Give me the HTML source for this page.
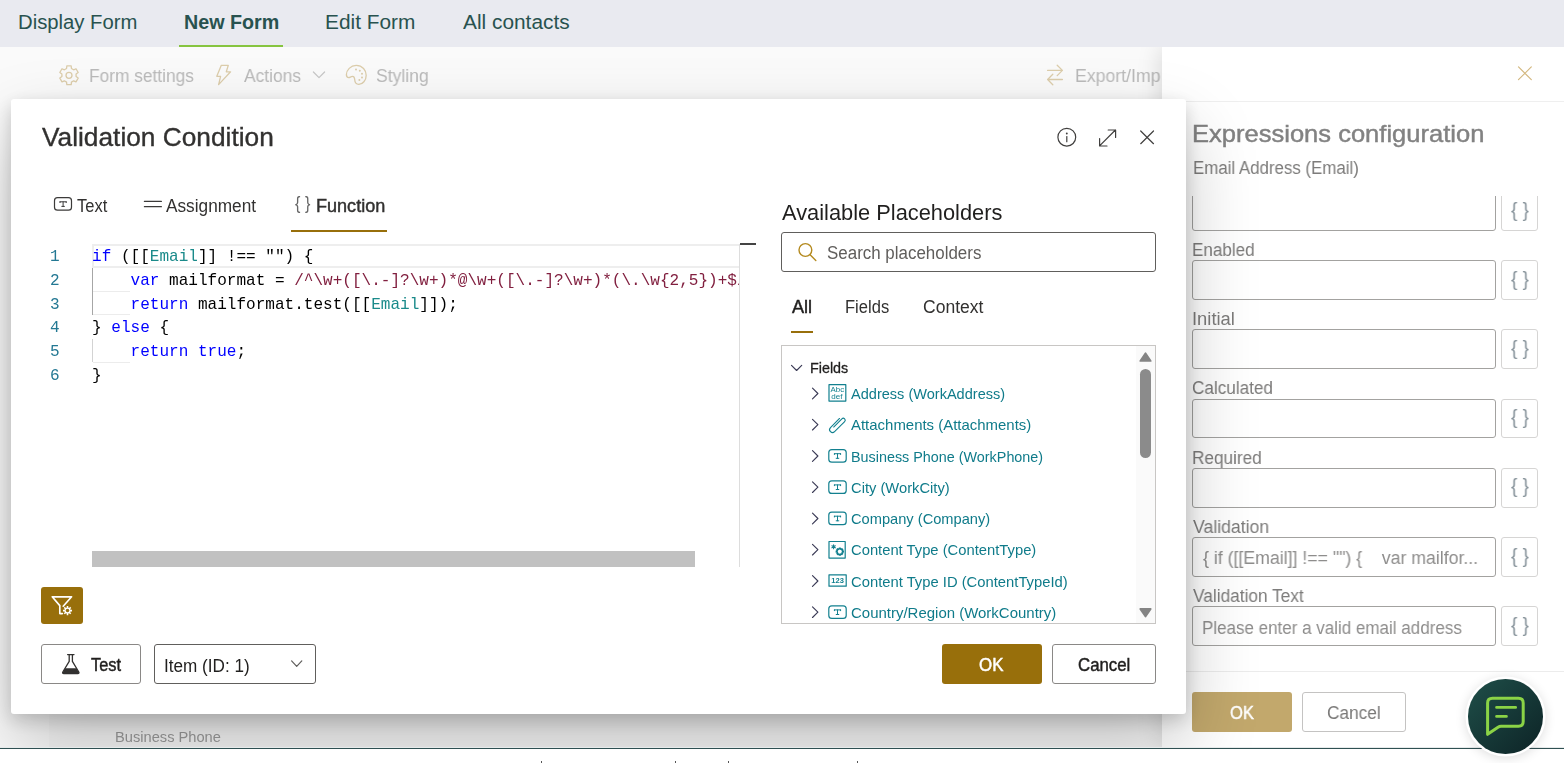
<!DOCTYPE html>
<html lang="en">
<head>
<meta charset="utf-8">
<title>Validation Condition</title>
<style>
*{box-sizing:border-box;margin:0;padding:0}
html,body{width:1564px;height:763px;overflow:hidden;background:#fff}
body{position:relative;font-family:"Liberation Sans",sans-serif;color:#201f1e}
.abs{position:absolute}
.t{position:absolute;white-space:nowrap;line-height:1;transform-origin:0 50%}
svg{position:absolute;overflow:visible}
/* top bar */
#topbar{left:0;top:0;width:1564px;height:47px;background:#e9eaf0}
#topbar .t{color:#28524f}
#nf-ul{left:179px;top:45px;width:104px;height:2px;background:#86c440}
/* page under overlay */
#page{left:0;top:47px;width:1564px;height:700px;background:#fafafa;overflow:hidden}
#canvas{left:49px;top:53px;width:1113px;height:647px;background:#f6f6f6}
#bottomline{left:0;top:747px;width:1564px;height:2px;background:linear-gradient(#e6eaea 0,#e6eaea 50%,#2f5052 50%,#2f5052 100%)}
#bottomwhite{left:0;top:749px;width:1564px;height:14px;background:#fff}
.tb .t{font-size:17px;color:#bababa;top:67px}
/* right panel */
#panel{left:1162px;top:47px;width:402px;height:700px;background:#fff;box-shadow:-2px 0 22px rgba(0,0,0,.13);clip-path:inset(0 0 0 -60px)}
#panel-hr{left:1162px;top:101px;width:402px;height:1px;background:#efefef}
#panel-fr{left:1162px;top:671px;width:402px;height:1px;background:#ececec}
.plabel{font-size:16.5px;color:#7d7c7b}
.pin{position:absolute;left:1192px;width:304px;height:39.75px;border:1px solid #a3a2a0;border-radius:3px;background:#fff}
.pbr{position:absolute;left:1501px;width:37px;height:39.75px;border:1px solid #d6d5d4;border-radius:3px;background:#fff}
.pbr .t{left:7px;top:9px;font-size:19px;color:#7a8287;letter-spacing:1px}
.pbg{color:#86929a}
.pin .t{left:11px;top:11px;font-size:16.5px;color:#8e8d8c}
/* modal */
#modal{left:11px;top:99px;width:1175px;height:615px;background:#fff;border-radius:3px;box-shadow:0 32px 72px rgba(0,0,0,.22),0 6px 18px rgba(0,0,0,.18)}
.mono{font-family:"Liberation Mono",monospace;font-size:17px;line-height:20px}
.ln,.cl{transform-origin:0 50%;transform:scaleX(.9436)}
.ln{position:absolute;left:50px;color:#237893}
.cl{position:absolute;left:92px;white-space:pre;color:#000}
.k{color:#0000ff}.p{color:#1a8a8a}.r{color:#811f3f}
.btn{position:absolute;height:40px;border:1px solid #8a8886;border-radius:3px;background:#fff}
#ph1,#ph2,[id^=pl],[id^=pv],#pok,#pcn,[id^=pb],#bp,[id^=tl]{will-change:transform}
.sb{-webkit-text-stroke:0.45px currentColor}
.tree .t{font-size:15px;color:#0f7b8a}
</style>
<style id="fit">
#tb1{left:18.12px;top:11.00px;font-size:20.0px;line-height:22px;transform:scaleX(1.0139)}
#tb2{left:183.64px;top:11.00px;font-size:20.0px;line-height:22px;transform:scaleX(0.9849)}
#tb3{left:325.26px;top:11.00px;font-size:20.0px;line-height:22px;transform:scaleX(1.0422)}
#tb4{left:463.29px;top:11.00px;font-size:20.0px;line-height:22px;transform:scaleX(1.0426)}
#tl1{left:88.55px;top:66.00px;font-size:18.0px;line-height:20px;transform:scaleX(0.9621)}
#tl2{left:243.75px;top:66.00px;font-size:18.0px;line-height:20px;transform:scaleX(0.9660)}
#tl3{left:375.88px;top:66.00px;font-size:18.0px;line-height:20px;transform:scaleX(0.9754)}
#tl4{left:1075.34px;top:66.00px;font-size:18.0px;line-height:20px;transform:scaleX(0.9825)}
#bp{left:114.78px;top:729.00px;font-size:14.5px;line-height:16px;transform:scaleX(1.0106)}
#ph1{left:1192.07px;top:120.00px;font-size:24.5px;line-height:27px;transform:scaleX(1.0420)}
#ph2{left:1192.60px;top:158.00px;font-size:18.0px;line-height:20px;transform:scaleX(0.9370)}
#pl1{left:1191.59px;top:240.00px;font-size:18.0px;line-height:20px;transform:scaleX(0.9483)}
#pl2{left:1192.10px;top:309.00px;font-size:18.0px;line-height:20px;transform:scaleX(1.0215)}
#pl3{left:1191.86px;top:378.00px;font-size:18.0px;line-height:20px;transform:scaleX(0.9522)}
#pl4{left:1192.38px;top:448.00px;font-size:18.0px;line-height:20px;transform:scaleX(0.9550)}
#pl5{left:1192.71px;top:517.00px;font-size:18.0px;line-height:20px;transform:scaleX(0.9782)}
#pl6{left:1192.74px;top:586.00px;font-size:18.0px;line-height:20px;transform:scaleX(0.9585)}
#pv1{left:1203.09px;top:548.00px;font-size:18.0px;line-height:20px;transform:scaleX(0.9834)}
#pv2{left:1202.19px;top:618.00px;font-size:18.0px;line-height:20px;transform:scaleX(0.9441)}
#pok{left:1230.23px;top:703.00px;font-size:18.0px;line-height:20px;transform:scaleX(0.9197)}
#pcn{left:1327.06px;top:703.00px;font-size:18.0px;line-height:20px;transform:scaleX(0.9582)}
#mt{left:42.12px;top:123.00px;font-size:25.5px;line-height:28px;transform:scaleX(1.0305)}
#mtab1{left:77.18px;top:196.00px;font-size:18.0px;line-height:20px;transform:scaleX(0.9160)}
#mtab2{left:165.93px;top:196.00px;font-size:18.0px;line-height:20px;transform:scaleX(0.9574)}
#mtab3{left:315.69px;top:196.00px;font-size:18.0px;line-height:20px;transform:scaleX(1.0028)}
#mbr{left:295.29px;top:192.00px;font-size:18.3px;line-height:21px;transform:scaleX(0.8831)}
#pb0{left:1510.65px;top:198.00px;font-size:21.0px;line-height:23px;transform:scaleX(0.9090)}
#pb1{left:1510.65px;top:267.00px;font-size:21.0px;line-height:23px;transform:scaleX(0.9090)}
#pb2{left:1510.65px;top:336.00px;font-size:21.0px;line-height:23px;transform:scaleX(0.9090)}
#pb3{left:1510.65px;top:405.00px;font-size:21.0px;line-height:23px;transform:scaleX(0.9090)}
#pb4{left:1510.65px;top:474.00px;font-size:21.0px;line-height:23px;transform:scaleX(0.9090)}
#pb5{left:1510.65px;top:544.00px;font-size:21.0px;line-height:23px;transform:scaleX(0.9090)}
#pb6{left:1510.65px;top:613.00px;font-size:21.0px;line-height:23px;transform:scaleX(0.9090)}
#bt1{left:91.09px;top:655.00px;font-size:18.0px;line-height:20px;transform:scaleX(0.9080)}
#bt2{left:164.06px;top:656.00px;font-size:18.0px;line-height:20px;transform:scaleX(0.9514)}
#bt3{left:979.41px;top:655.00px;font-size:18.0px;line-height:20px;transform:scaleX(0.9390)}
#bt4{left:1077.97px;top:655.00px;font-size:18.0px;line-height:20px;transform:scaleX(0.9333)}
#ap{left:781.69px;top:200.00px;font-size:22.3px;line-height:25px;transform:scaleX(0.9789)}
#sp{left:827.13px;top:243.00px;font-size:18.0px;line-height:20px;transform:scaleX(0.9408)}
#pt1{left:792.18px;top:297.00px;font-size:18.0px;line-height:20px;transform:scaleX(1.0068)}
#pt2{left:845.28px;top:297.00px;font-size:18.0px;line-height:20px;transform:scaleX(0.9199)}
#pt3{left:922.77px;top:297.00px;font-size:18.0px;line-height:20px;transform:scaleX(0.9734)}
#tr0{left:809.77px;top:359.00px;font-size:15.0px;line-height:17px;transform:scaleX(0.9559)}
#tr1{left:851.37px;top:385.00px;font-size:15.0px;line-height:17px;transform:scaleX(0.9697)}
#tr2{left:851.35px;top:416.00px;font-size:15.0px;line-height:17px;transform:scaleX(0.9965)}
#tr3{left:850.80px;top:448.00px;font-size:15.0px;line-height:17px;transform:scaleX(0.9574)}
#tr4{left:850.66px;top:479.00px;font-size:15.0px;line-height:17px;transform:scaleX(0.9814)}
#tr5{left:850.66px;top:510.00px;font-size:15.0px;line-height:17px;transform:scaleX(0.9766)}
#tr6{left:850.66px;top:541.00px;font-size:15.0px;line-height:17px;transform:scaleX(0.9846)}
#tr7{left:850.66px;top:573.00px;font-size:15.0px;line-height:17px;transform:scaleX(0.9858)}
#tr8{left:850.65px;top:604.00px;font-size:15.0px;line-height:17px;transform:scaleX(0.9982)}
</style>
</head>
<body>
<!-- TOP BAR -->
<div id="topbar" class="abs">
  <span class="t" id="tb1" style="">Display Form</span>
  <span class="t" id="tb2" style="font-weight:bold">New Form</span>
  <span class="t" id="tb3" style="">Edit Form</span>
  <span class="t" id="tb4" style="">All contacts</span>
  <div id="nf-ul" class="abs"></div>
</div>
<!-- PAGE -->
<div id="page" class="abs"></div>
<div id="canvas" class="abs" style="top:100px"></div>
<div class="tb">
  <span class="t" id="tl1" style="">Form settings</span>
  <span class="t" id="tl2" style="">Actions</span>
  <span class="t" id="tl3" style="">Styling</span>
  <span class="t" id="tl4" style="">Export/Imp</span>
</div>
<span class="t" id="bp" style="color:#9b9b9b">Business Phone</span>
<!-- PANEL -->
<div id="panel" class="abs"></div>
<div id="panel-hr" class="abs"></div>
<div id="panel-fr" class="abs"></div>
<span class="t sb" id="ph1" style="color:#828282">Expressions configuration</span>
<span class="t plabel" id="ph2" style="">Email Address (Email)</span>
<div class="abs" style="left:1190px;top:196px;width:360px;height:40px;overflow:hidden">
  <div class="pin" style="left:2px;top:-4.5px"></div><div class="pbr" style="left:311px;top:-4.5px"></div>
</div>
<span class="t plabel" id="pl1" style="">Enabled</span>
<div class="pin" style="top:260px"></div><div class="pbr" style="top:260px"></div>
<span class="t plabel" id="pl2" style="">Initial</span>
<div class="pin" style="top:329.25px"></div><div class="pbr" style="top:329.25px"></div>
<span class="t plabel" id="pl3" style="">Calculated</span>
<div class="pin" style="top:398.5px"></div><div class="pbr" style="top:398.5px"></div>
<span class="t plabel" id="pl4" style="">Required</span>
<div class="pin" style="top:467.75px"></div><div class="pbr" style="top:467.75px"></div>
<span class="t plabel" id="pl5" style="">Validation</span>
<div class="pin" style="top:537px"></div><div class="pbr" style="top:537px"></div>
<span class="t plabel" id="pl6" style="">Validation Text</span>
<div class="pin" style="top:606.25px"></div><div class="pbr" style="top:606.25px"></div>
<span class="t" id="pv1" style="color:#8e8d8c;white-space:pre">{ if ([[Email]] !== "") {    var mailfor...</span>
<span class="t" id="pv2" style="color:#8e8d8c">Please enter a valid email address</span>
<span class="t pbg" id="pb0">{ }</span><span class="t pbg" id="pb1">{ }</span><span class="t pbg" id="pb2">{ }</span><span class="t pbg" id="pb3">{ }</span><span class="t pbg" id="pb4">{ }</span><span class="t pbg" id="pb5">{ }</span><span class="t pbg" id="pb6">{ }</span>
<div class="abs" style="left:1192px;top:692px;width:100px;height:40px;background:#c2a86c;border-radius:3px"></div>
<span class="t sb" id="pok" style="color:#fff">OK</span>
<div class="abs" style="left:1302px;top:692px;width:104px;height:40px;border:1px solid #c4c3c2;border-radius:3px;background:#fff"></div>
<span class="t" id="pcn" style="color:#7a7978">Cancel</span>
<svg id="ic-under" style="left:0;top:0" width="1564" height="763" viewBox="0 0 1564 763" fill="none" stroke-linecap="round" stroke-linejoin="round">
<g stroke="#dccdab" stroke-width="1.3">
<path d="M66.56,68.53 L66.81,65.95 L71.19,65.95 L71.44,68.53 L73.65,69.80 L76.00,68.73 L78.19,72.53 L76.09,74.02 L76.09,76.58 L78.19,78.07 L76.00,81.87 L73.65,80.80 L71.44,82.07 L71.19,84.65 L66.81,84.65 L66.56,82.07 L64.35,80.80 L62.00,81.87 L59.81,78.07 L61.91,76.58 L61.91,74.02 L59.81,72.53 L62.00,68.73 L64.35,69.80Z"/>
<circle cx="69" cy="75.3" r="3"/>
<path d="M221.3,65.3 L228.3,65.3 L226.3,71.8 L230.6,71.8 L218.6,84.6 L220.6,76.3 L216.8,76.3 Z"/>
<path d="M356.2,65.4 C362.5,65.4 366.2,70.5 366.2,75.2 C366.2,80.5 362.6,84.4 358.8,84.4 C355.6,84.4 354.8,82.2 354.7,79.6 C354.6,77.5 354.3,76.4 352.6,76.4 C350.8,76.4 350,77.7 348.7,77.7 C347.3,77.7 346.4,76.3 346.4,74.6 C346.4,70.2 350.6,65.4 356.2,65.4Z"/>
<path d="M1047.6,70.4 H1062.4 M1057.2,65.2 L1062.4,70.4 L1057.2,75.6 M1062.4,79.5 H1047.6 M1052.8,74.3 L1047.6,79.5 L1052.8,84.7"/>
</g>
<g fill="#dccdab"><circle cx="356" cy="69.6" r="1"/><circle cx="359.8" cy="70.8" r="1"/><circle cx="362" cy="73.8" r="1"/><circle cx="362" cy="77.5" r="1"/><circle cx="359.4" cy="80" r="1"/></g>
<path d="M313.4,72 L319,77.6 L324.6,72" stroke="#c6c6c6" stroke-width="1.2"/>
<path d="M1518.5,66.9 L1531.3,79.7 M1531.3,66.9 L1518.5,79.7" stroke="#d3b77e" stroke-width="1.15"/>
</svg>
<!-- MODAL -->
<div id="modal" class="abs"></div>
<span class="t sb" id="mt" style="color:#323130;-webkit-text-stroke-width:.35px">Validation Condition</span>
<!-- modal tabs -->
<span class="t" id="mtab1" style="color:#323130">Text</span>
<span class="t" id="mtab2" style="color:#323130">Assignment</span>
<span class="t" id="mbr" style="color:#666">{ }</span>
<span class="t sb" id="mtab3" style="color:#323130">Function</span>
<div class="abs" style="left:291px;top:230px;width:96px;height:2px;background:#986f0b"></div>
<!-- editor -->
<div class="abs" style="left:92px;top:244px;width:647px;height:24px;border:2px solid #eee;border-right:none"></div>
<div class="abs" style="left:739px;top:244px;width:1px;height:323px;background:#dddddd"></div>
<div class="abs" style="left:740px;top:243px;width:16px;height:2px;background:#444"></div>
<div class="abs" style="left:92px;top:268px;width:1px;height:47px;background:#a6a6a6"></div>
<div class="abs" style="left:92px;top:339px;width:1px;height:23px;background:#d3d3d3"></div>
<div class="abs" style="left:93px;top:291px;width:37px;height:1px;background:#ececec"></div><div class="abs" style="left:93px;top:314px;width:37px;height:1px;background:#ececec"></div><div class="abs" style="left:93px;top:362px;width:37px;height:1px;background:#ececec"></div>
<div class="abs mono" style="left:0;top:0;width:739px;height:600px;overflow:hidden;background:transparent">
<span class="ln" style="top:247px">1</span><span class="cl" style="top:247px"><span class="k">if</span> ([[<span class="p">Email</span>]] !== "") {</span>
<span class="ln" style="top:271px">2</span><span class="cl" style="top:271px">    <span class="k">var</span> mailformat = <span class="r">/^\w+([\.-]?\w+)*@\w+([\.-]?\w+)*(\.\w{2,5})+$/</span>;</span>
<span class="ln" style="top:295px">3</span><span class="cl" style="top:295px">    <span class="k">return</span> mailformat.test([[<span class="p">Email</span>]]);</span>
<span class="ln" style="top:318px">4</span><span class="cl" style="top:318px">} <span class="k">else</span> {</span>
<span class="ln" style="top:342px">5</span><span class="cl" style="top:342px">    <span class="k">return</span> <span class="k">true</span>;</span>
<span class="ln" style="top:366px">6</span><span class="cl" style="top:366px">}</span>
</div>
<div class="abs" style="left:92px;top:551px;width:603px;height:16px;background:#c1c1c1"></div>
<!-- funnel button -->
<div class="abs" style="left:41px;top:587px;width:42px;height:37px;background:#986f0b;border-radius:3px"></div>
<!-- bottom buttons -->
<div class="btn" style="left:41px;top:644px;width:100px"></div>
<span class="t sb" id="bt1" style="color:#201f1e">Test</span>
<div class="btn" style="left:154px;top:644px;width:162px;border-color:#605e5c"></div>
<span class="t" id="bt2" style="color:#201f1e">Item (ID: 1)</span>
<div class="abs" style="left:942px;top:644px;width:100px;height:40px;background:#986f0b;border-radius:3px"></div>
<span class="t sb" id="bt3" style="color:#fff">OK</span>
<div class="btn" style="left:1052px;top:644px;width:104px"></div>
<span class="t sb" id="bt4" style="color:#201f1e">Cancel</span>
<!-- placeholders -->
<span class="t" id="ap" style="color:#201f1e">Available Placeholders</span>
<div class="abs" style="left:781px;top:232px;width:375px;height:39.5px;border:1px solid #605e5c;border-radius:3px;background:#fff"></div>
<span class="t" id="sp" style="color:#605e5c">Search placeholders</span>
<span class="t sb" id="pt1" style="color:#201f1e">All</span>
<span class="t" id="pt2" style="color:#323130">Fields</span>
<span class="t" id="pt3" style="color:#323130">Context</span>
<div class="abs" style="left:791px;top:331px;width:22px;height:2px;background:#986f0b"></div>
<div class="abs" style="left:781px;top:345px;width:375px;height:279px;border:1px solid #c8c6c4;background:#fff"></div>
<div class="abs" style="left:1136px;top:346px;width:19px;height:277px;background:#fafafa"></div>
<div class="abs" style="left:1140px;top:369px;width:11px;height:89px;border-radius:6px;background:#8b8b8b"></div>
<div class="tree">
<span class="t sb" id="tr0" style="color:#201f1e;-webkit-text-stroke-width:.3px">Fields</span>
<span class="t" id="tr1" style="">Address (WorkAddress)</span>
<span class="t" id="tr2" style="">Attachments (Attachments)</span>
<span class="t" id="tr3" style="">Business Phone (WorkPhone)</span>
<span class="t" id="tr4" style="">City (WorkCity)</span>
<span class="t" id="tr5" style="">Company (Company)</span>
<span class="t" id="tr6" style="">Content Type (ContentType)</span>
<span class="t" id="tr7" style="">Content Type ID (ContentTypeId)</span>
<span class="t" id="tr8" style="">Country/Region (WorkCountry)</span>
</div>
<div id="bottomline" class="abs"></div><div id="bottomwhite" class="abs"></div>
<div class="abs" style="left:541px;top:761px;width:1px;height:2px;background:#555"></div><div class="abs" style="left:675px;top:761px;width:1px;height:2px;background:#555"></div><div class="abs" style="left:728px;top:761px;width:1px;height:2px;background:#555"></div><div class="abs" style="left:857px;top:761px;width:1px;height:2px;background:#555"></div>
<!-- chat bubble -->
<div class="abs" style="left:1468px;top:679px;width:74.6px;height:74.6px;border-radius:50%;background:linear-gradient(135deg,#1f4f49,#0d2326);box-shadow:0 0 0 2.5px #fff,0 2px 12px 2px rgba(0,0,0,.14)"></div>
<svg id="ic-over" style="left:0;top:0" width="1564" height="763" viewBox="0 0 1564 763" fill="none" stroke-linecap="round" stroke-linejoin="round">
<!-- modal header icons -->
<g stroke="#403f3e" stroke-width="1.2">
<circle cx="1066.8" cy="137.2" r="8.9"/>
<path d="M1066.8,136.5 V141.7"/>
<path d="M1099.8,145.6 L1115.4,130 M1108.2,130 H1115.6 V137.4 M1099.6,138.6 V146 H1107"/>
<path d="M1140.7,131 L1153.5,143.7 M1153.5,131 L1140.7,143.7"/>
</g>
<circle cx="1066.8" cy="133.5" r="0.95" fill="#403f3e"/>
<!-- tab icons -->
<g stroke="#3b3a39" stroke-width="1.2">
<rect x="54.5" y="197.7" width="17" height="12.5" rx="3"/>
<path d="M60,201.8 H66.2 M63.1,201.8 V206.4 M61.8,206.4 H64.4 M60,201.8 V202.6 M66.2,201.8 V202.6" stroke-width="1"/>
<path d="M144.4,201.4 H161.4 M144.4,206.7 H161.4"/>
</g>
<!-- search icon -->
<g stroke="#b48a1f" stroke-width="1.4"><circle cx="805.4" cy="250" r="6.4"/><path d="M810.1,254.7 L815.8,260.4"/></g>
<!-- tree chevrons -->
<g stroke="#3a3a55" stroke-width="1.15">
<path d="M791.5,365.3 L796.6,370.5 L801.7,365.3"/>
<path d="M812.5,388.2 L817.9,393.5 L812.5,398.8"/>
<path d="M812.5,419.4 L817.9,424.7 L812.5,430"/>
<path d="M812.5,450.7 L817.9,456 L812.5,461.3"/>
<path d="M812.5,481.9 L817.9,487.2 L812.5,492.5"/>
<path d="M812.5,513.2 L817.9,518.5 L812.5,523.8"/>
<path d="M812.5,544.4 L817.9,549.7 L812.5,555"/>
<path d="M812.5,575.7 L817.9,581 L812.5,586.3"/>
<path d="M812.5,606.9 L817.9,612.2 L812.5,617.5"/>
</g>
<!-- tree icons -->
<g stroke="#12808f" stroke-width="1.2">
<rect x="829" y="384.7" width="16.8" height="16.4"/>
<path transform="translate(837.2,424.9) rotate(-45)" d="M 6.2,-2.9 L -6.6,-2.9 A 2.9 2.9 0 0 0 -6.6,2.9 L 7.6,2.9 A 1.95 1.95 0 0 0 7.6,-1 L -4,-1" stroke-width="1.1"/>
<rect x="828.8" y="449.6" width="17.4" height="12.6" rx="3"/>
<rect x="828.8" y="480.8" width="17.4" height="12.6" rx="3"/>
<rect x="828.8" y="512.1" width="17.4" height="12.6" rx="3"/>
<rect x="829" y="541.5" width="16.2" height="16.6"/>
<rect x="829" y="574.8" width="17.2" height="11.4"/>
<rect x="828.8" y="605.8" width="17.4" height="12.6" rx="3"/>
<g stroke-width="1">
<path d="M834.4,453.7 H840.6 M837.5,453.7 V458.3 M836.2,458.3 H838.8 M834.4,453.7 V454.5 M840.6,453.7 V454.5"/>
<path d="M834.4,484.9 H840.6 M837.5,484.9 V489.5 M836.2,489.5 H838.8 M834.4,484.9 V485.7 M840.6,484.9 V485.7"/>
<path d="M834.4,516.2 H840.6 M837.5,516.2 V520.8 M836.2,520.8 H838.8 M834.4,516.2 V517 M840.6,516.2 V517"/>
<path d="M834.4,609.9 H840.6 M837.5,609.9 V614.5 M836.2,614.5 H838.8 M834.4,609.9 V610.7 M840.6,609.9 V610.7"/>
<path d="M839.16,549.18 L839.18,548.05 L840.42,548.05 L840.44,549.18 L841.06,549.44 L841.87,548.65 L842.75,549.53 L841.96,550.34 L842.22,550.96 L843.35,550.98 L843.35,552.22 L842.22,552.24 L841.96,552.86 L842.75,553.67 L841.87,554.55 L841.06,553.76 L840.44,554.02 L840.42,555.15 L839.18,555.15 L839.16,554.02 L838.54,553.76 L837.73,554.55 L836.85,553.67 L837.64,552.86 L837.38,552.24 L836.25,552.22 L836.25,550.98 L837.38,550.96 L837.64,550.34 L836.85,549.53 L837.73,548.65 L838.54,549.44Z" stroke-width="1.25"/>
<path d="M833.6,544.8 V548.8 M831.9,545.8 L835.3,547.8 M835.3,545.8 L831.9,547.8" stroke-width="1.1"/>
</g>
</g>
<g font-family="Liberation Sans, sans-serif" fill="#12808f" stroke="none">
<text x="830.6" y="392.3" font-size="6.6" textLength="13.6" lengthAdjust="spacingAndGlyphs">Abc</text>
<text x="831.2" y="399.3" font-size="6.6" textLength="11.2" lengthAdjust="spacingAndGlyphs">def</text>
<text x="831.3" y="583.2" font-size="7" font-weight="bold" textLength="12.6" lengthAdjust="spacingAndGlyphs">123</text>
</g>
<!-- scrollbar arrows -->
<path d="M1140.3,360.9 L1145.5,353.2 L1150.7,360.9Z" fill="#848484" stroke="#848484" stroke-width="1.8"/>
<path d="M1140.3,608.9 L1145.5,616.6 L1150.7,608.9Z" fill="#848484" stroke="#848484" stroke-width="1.8"/>
<!-- funnel -->
<g stroke="#fff" stroke-width="1.65">
<path d="M52.2,596.8 H71.6 L63.2,606.2 M52.2,596.8 L59.8,605.6 V613.6 H62.4"/>
</g>
<path d="M66.71,607.60 L66.71,606.07 L68.29,606.07 L68.29,607.60 L69.06,607.92 L70.15,606.84 L71.26,607.95 L70.18,609.04 L70.50,609.81 L72.03,609.81 L72.03,611.39 L70.50,611.39 L70.18,612.16 L71.26,613.25 L70.15,614.36 L69.06,613.28 L68.29,613.60 L68.29,615.13 L66.71,615.13 L66.71,613.60 L65.94,613.28 L64.85,614.36 L63.74,613.25 L64.82,612.16 L64.50,611.39 L62.97,611.39 L62.97,609.81 L64.50,609.81 L64.82,609.04 L63.74,607.95 L64.85,606.84 L65.94,607.92Z" fill="#fff" stroke="none"/>
<circle cx="67.5" cy="610.6" r="1.75" fill="#986f0b"/>
<!-- flask -->
<g stroke="#323130" stroke-width="1.3">
<path d="M67.6,654.6 H74 M69.2,654.6 V661.4 L62.8,672 C62.3,672.9 62.8,673.6 63.8,673.6 H77.8 C78.8,673.6 79.3,672.9 78.8,672 L72.4,661.4 V654.6"/>
</g>
<path d="M65.2,668.2 H76.4 L78.8,672.2 C79.2,673 78.8,673.7 77.8,673.7 H63.8 C62.8,673.7 62.4,673 62.8,672.2Z" fill="#323130"/>
<!-- dropdown chevron -->
<path d="M291.6,660.9 L296.7,666.3 L301.8,660.9" stroke="#605e5c" stroke-width="1.2"/>
<!-- chat icon -->
<g stroke="#8bd346" stroke-width="3">
<path d="M1492.5,698.3 H1518.5 Q1523.2,698.3 1523.2,703 V721.6 Q1523.2,726.3 1518.5,726.3 H1501 Q1499.4,726.3 1498,727.2 L1487.6,734.3 V703 Q1487.6,698.3 1492.5,698.3Z"/>
<path d="M1496.6,707.4 H1515.6 M1496.6,716.4 H1506.4" stroke-width="2.9"/>
</g>
</svg>
</body>
</html>
